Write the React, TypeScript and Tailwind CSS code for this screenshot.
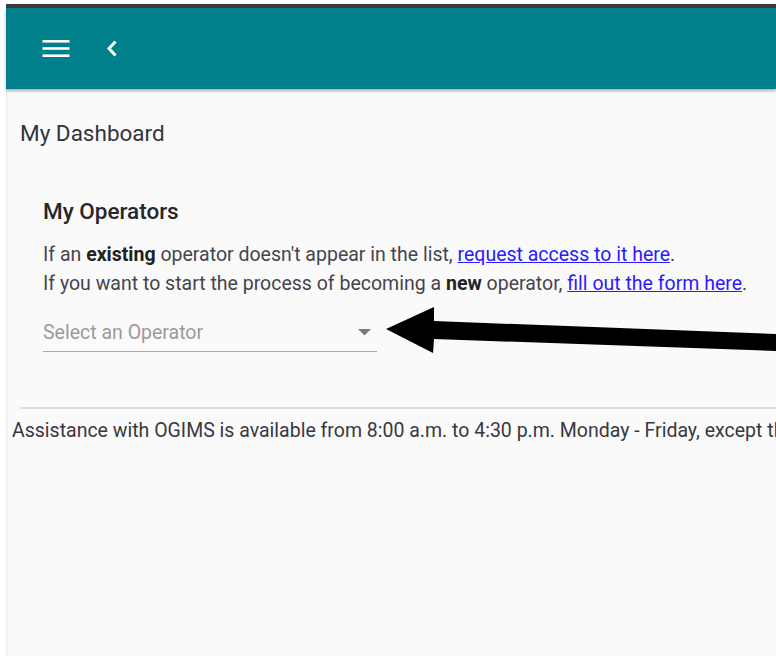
import React from "react";

function MenuIcon() {
  return (
    <svg width="28" height="18" viewBox="0 0 28 18" className="block">
      <rect x="0.5" y="0" width="27" height="2.6" fill="#fff" />
      <rect x="0.5" y="7.2" width="27" height="2.6" fill="#fff" />
      <rect x="0.5" y="14.4" width="27" height="2.6" fill="#fff" />
    </svg>
  );
}

function BackIcon() {
  return (
    <svg width="12" height="17" viewBox="0 0 12 17" className="block">
      <path d="M9.5 1.5 L3 8.5 L9.5 15.5" fill="none" stroke="#fff" strokeWidth="3" strokeLinejoin="miter" />
    </svg>
  );
}

export default function App() {
  return (
    <div
      className="relative w-[776px] h-[656px] overflow-hidden bg-white pl-[6px] pt-[4px]"
      style={{ fontFamily: "Roboto, 'Liberation Sans', sans-serif" }}
    >
      <div className="flex h-full flex-col">
        <div className="h-[4px] bg-[#3b3b3b]" />
        <header className="relative z-10 flex h-[81px] items-center bg-[#00808a] pl-[36px] shadow-[0_2px_3px_rgba(0,0,0,0.3)]">
          <MenuIcon />
          <div className="ml-[36px]">
            <BackIcon />
          </div>
        </header>
        <main className="flex-1 bg-[#fafafa] shadow-[inset_2px_0_2px_-1px_rgba(0,0,0,0.08)]">
          <h1 className="ml-[14px] mt-[30px] text-[22.5px] leading-[28px] text-[#33333d]">My Dashboard</h1>
          <section className="ml-[37px] mt-[50px]">
            <h2 className="text-[22.5px] font-medium leading-[28px] text-[#26262b]">My Operators</h2>
            <div className="mt-[15px] text-[19.5px] leading-[29px] text-[#45454d]">
              <p>
                If an <b className="font-bold text-[#222]">existing</b> operator doesn't appear in the list,{" "}
                <a href="#" className="text-[#2a1aff] underline">request access to it here</a>.
              </p>
              <p>
                If you want to start the process of becoming a <b className="font-bold text-[#222]">new</b> operator,{" "}
                <a href="#" className="text-[#2a1aff] underline">fill out the form here</a>.
              </p>
            </div>
            <div className="mt-[14px] flex h-[40px] w-[334px] items-end justify-between border-b border-[#a8a8a8] pb-[6px] pr-[6px]">
              <span className="text-[19.5px] leading-[24px] text-[#9a9a9a]">Select an Operator</span>
              <svg width="13" height="7" viewBox="0 0 13 7" className="mb-[9px] block">
                <path d="M0 0 L13 0 L6.5 6.5 Z" fill="#7a7a7a" />
              </svg>
            </div>
          </section>
          <div className="ml-[14px] mt-[55px] h-[2px] bg-[#dcdcdc]" />
          <p className="ml-[6px] mt-[10px] whitespace-nowrap text-[19.5px] leading-[24px] text-[#383840]">
            Assistance with OGIMS is available from 8:00 a.m. to 4:30 p.m. Monday - Friday, except the dates listed below.
          </p>
        </main>
      </div>
      <svg className="pointer-events-none absolute left-0 top-0" width="776" height="656" viewBox="0 0 776 656">
        <polygon points="386,329 434,307 434,321 776,334 776,351 434,339 433,353" fill="#000" />
      </svg>
    </div>
  );
}
